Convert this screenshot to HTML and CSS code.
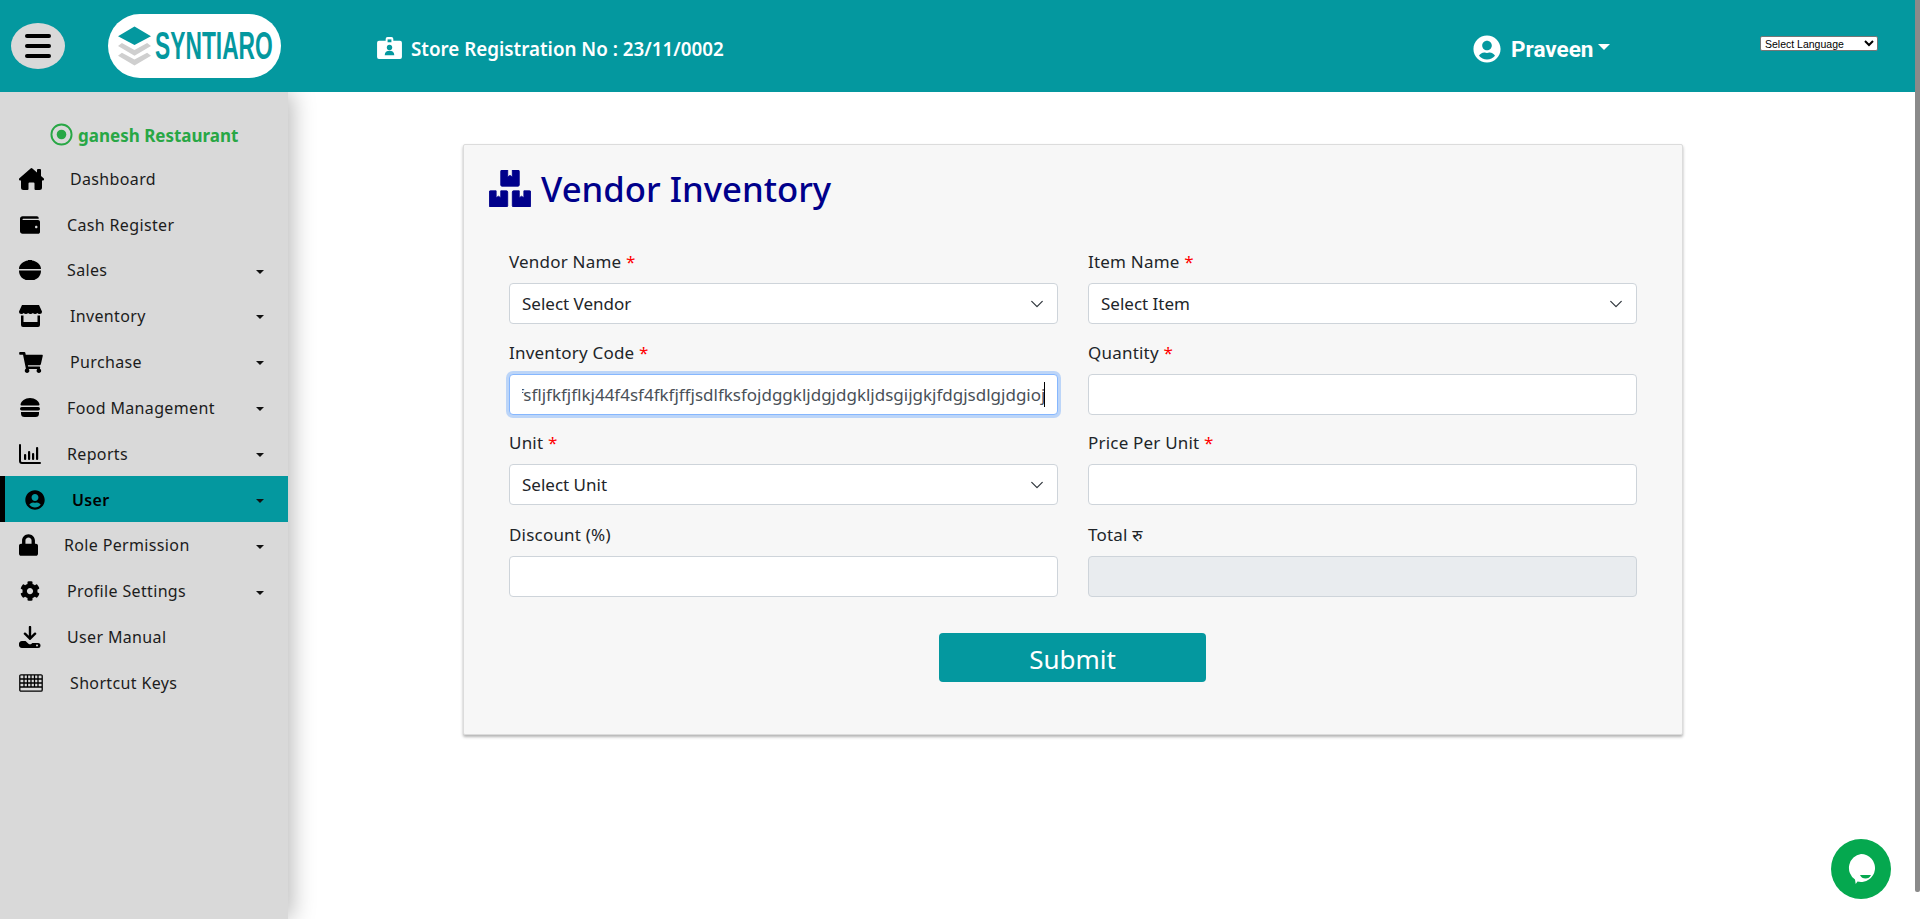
FILE: index.html
```html
<!DOCTYPE html>
<html lang="en">
<head>
<meta charset="utf-8">
<title>Vendor Inventory</title>
<link rel="stylesheet" href="styles.css">
</head>
<body>
<div class="scroll-thumb"></div>
<header class="topbar">
  <button class="menu-btn" aria-label="Menu"><span></span><span></span><span></span></button>
  <div class="logo">
    <svg class="logo-mark" viewBox="0 0 34 40"><path class="lm-t" d="M17 0 34 10 17 19 0 10Z"/><path class="lm-g" d="M4 17 17 24 30 17 34 20 17 30 0 20Z"/><path class="lm-g" d="M4 27 17 34 30 27 34 30 17 40 0 30Z"/></svg>
    <span class="logo-text">SYNTIARO</span>
  </div>
  <div class="store-reg">
    <svg class="reg-icon" viewBox="0 0 26 23"><path class="w" d="M2 4h7V2a2 2 0 0 1 2-2h4a2 2 0 0 1 2 2v2h7a2 2 0 0 1 2 2v15a2 2 0 0 1-2 2H2a2 2 0 0 1-2-2V6a2 2 0 0 1 2-2Z"/><rect class="t" x="11" y="2.500" width="4" height="3"/><circle class="t" cx="13" cy="11" r="2.800"/><path class="t" d="M8 19c0-3 2-4.500 5-4.500s5 1.500 5 4.500Z"/></svg>
    <span>Store Registration No : 23/11/0002</span>
  </div>
  <div class="user-menu">
    <svg class="user-icon" viewBox="0 0 496 512"><path d="M248 8C111 8 0 119 0 256s111 248 248 248 248-111 248-248S385 8 248 8zm0 96c48.600 0 88 39.400 88 88s-39.400 88-88 88-88-39.400-88-88 39.400-88 88-88zm0 344c-58.700 0-111.300-26.600-146.500-68.200 18.800-35.400 55.600-59.800 98.500-59.800 2.400 0 4.800.4 7.100 1.100 13 4.200 26.600 6.900 40.900 6.900 14.300 0 28-2.700 40.900-6.900 2.300-.7 4.700-1.100 7.100-1.100 42.900 0 79.700 24.400 98.500 59.800C359.300 421.400 306.700 448 248 448z"/></svg>
    <span class="user-name">Praveen</span>
    <i class="user-caret"></i>
  </div>
  <select class="lang"><option>Select Language</option></select>
</header>

<div class="layout">
  <aside class="sidebar">
    <div class="store-name">
      <svg class="store-dot" viewBox="0 0 24 24"><circle cx="12" cy="12" r="10.500"/><circle class="dot" cx="12" cy="12" r="5"/></svg>
      <span>ganesh Restaurant</span>
    </div>
    <nav>
      <a class="item wide"><span class="ic"><svg class="i-home" viewBox="0 0 25 22"><path d="M11.600.4a1.400 1.400 0 0 1 1.800 0L18 4.500V2a1 1 0 0 1 1-1h2a1 1 0 0 1 1 1v6l2.600 2.300c.9.8.3 2.200-.9 2.200H23v7a2.500 2.500 0 0 1-2.500 2.500h-4a1 1 0 0 1-1-1v-5.500a1 1 0 0 0-1-1h-4a1 1 0 0 0-1 1V21a1 1 0 0 1-1 1h-4A2.500 2.500 0 0 1 2 19.500v-7h-.7C.1 12.500-.5 11.100.4 10.300Z"/></svg></span>Dashboard</a>
      <a class="item"><span class="ic"><svg class="i-22" viewBox="0 0 512 512"><path d="M461.200 128H80c-8.840 0-16-7.160-16-16s7.160-16 16-16h384c8.840 0 16-7.160 16-16 0-26.510-21.490-48-48-48H64C28.650 32 0 60.650 0 96v320c0 35.350 28.650 64 64 64h397.200c28.020 0 50.800-21.530 50.800-48V176c0-26.470-22.780-48-50.800-48zM416 336c-17.670 0-32-14.330-32-32s14.330-32 32-32 32 14.330 32 32-14.330 32-32 32z"/></svg></span>Cash Register</a>
      <a class="item has-sub"><span class="ic"><svg class="i-22" viewBox="0 0 22 20"><path d="M0 9C0 4.500 4.500 1.200 9 .6a2 2 0 0 1 4 0C17.500 1.200 22 4.500 22 9Z"/><path d="M0 10.500h22c0 4.500-2.500 8-6 9l-.5.5h-9l-.5-.5c-3.500-1-6-4.500-6-9Z"/></svg></span>Sales<i class="caret"></i></a>
      <a class="item wide has-sub"><span class="ic"><svg class="i-23" viewBox="0 0 23 22"><path d="M3 0h17l3 6.500a2.500 2.500 0 0 1-2.500 2.500c-1 0-1.700-.4-2.200-1-.5.600-1.300 1-2.200 1s-1.700-.4-2.200-1c-.5.600-1.300 1-2.400 1s-1.900-.4-2.400-1c-.5.600-1.300 1-2.200 1s-1.700-.4-2.200-1c-.5.600-1.200 1-2.200 1A2.500 2.500 0 0 1 0 6.500Z"/><path d="M2 10.500h2.500V17h14v-6.500H21V20a2 2 0 0 1-2 2H4a2 2 0 0 1-2-2Z"/></svg></span>Inventory<i class="caret"></i></a>
      <a class="item wide has-sub"><span class="ic"><svg class="i-24" viewBox="0 0 576 512"><path d="M528.120 301.319l47.273-208C578.806 78.301 567.391 64 551.990 64H159.208l-9.166-44.810C147.758 8.021 137.930 0 126.529 0H24C10.745 0 0 10.745 0 24v16c0 13.255 10.745 24 24 24h69.883l70.248 343.435C147.325 417.100 136 435.222 136 456c0 30.928 25.072 56 56 56s56-25.072 56-56c0-15.674-6.447-29.835-16.824-40h209.647C430.447 426.165 424 440.326 424 456c0 30.928 25.072 56 56 56s56-25.072 56-56c0-22.172-12.888-41.332-31.579-50.405l5.517-24.276c3.413-15.018-8.002-29.319-23.403-29.319H218.117l-6.545-32h293.145c11.206 0 20.920-7.754 23.403-18.681z"/></svg></span>Purchase<i class="caret"></i></a>
      <a class="item has-sub"><span class="ic ic-in"><svg class="i-20" viewBox="0 0 20 19"><path d="M10 0c5 0 9 3 9.500 6.500a1 1 0 0 1-1 1h-17a1 1 0 0 1-1-1C1 3 5 0 10 0Z"/><rect y="9" width="20" height="3.500" rx="1.700"/><path d="M1 14h18v1.500a3.500 3.500 0 0 1-3.500 3.500h-11A3.500 3.500 0 0 1 1 15.500Z"/></svg></span>Food Management<i class="caret"></i></a>
      <a class="item has-sub"><span class="ic"><svg class="i-22" viewBox="0 0 22 20"><path d="M0 1a1 1 0 0 1 2 0v16a1 1 0 0 0 1 1h18a1 1 0 0 1 0 2H3a3 3 0 0 1-3-3Z"/><rect x="5" y="10" width="2.200" height="6" rx="1"/><rect x="9" y="7" width="2.200" height="9" rx="1"/><rect x="13" y="9" width="2.200" height="7" rx="1"/><rect x="17" y="3" width="2.200" height="13" rx="1"/></svg></span>Reports<i class="caret"></i></a>
      <a class="item active has-sub"><span class="ic"><svg class="i-22" viewBox="0 0 496 512"><path d="M248 8C111 8 0 119 0 256s111 248 248 248 248-111 248-248S385 8 248 8zm0 96c48.600 0 88 39.400 88 88s-39.400 88-88 88-88-39.400-88-88 39.400-88 88-88zm0 344c-58.700 0-111.300-26.600-146.500-68.200 18.800-35.400 55.600-59.800 98.500-59.800 2.400 0 4.800.4 7.100 1.100 13 4.200 26.600 6.900 40.900 6.900 14.300 0 28-2.700 40.900-6.900 2.300-.7 4.700-1.100 7.100-1.100 42.900 0 79.700 24.400 98.500 59.800C359.300 421.400 306.700 448 248 448z"/></svg></span>User<i class="caret"></i></a>
      <a class="item narrow has-sub"><span class="ic"><svg class="i-19" viewBox="0 0 448 512"><path d="M400 224h-24v-72C376 68.200 307.800 0 224 0S72 68.200 72 152v72H48c-26.500 0-48 21.500-48 48v192c0 26.500 21.500 48 48 48h352c26.500 0 48-21.500 48-48V272c0-26.500-21.500-48-48-48zm-104 0H152v-72c0-39.700 32.300-72 72-72s72 32.300 72 72v72z"/></svg></span>Role Permission<i class="caret"></i></a>
      <a class="item has-sub"><span class="ic"><svg class="i-22" viewBox="0 0 512 512"><path d="M487.400 315.700l-42.600-24.600c4.300-23.200 4.300-47 0-70.200l42.600-24.600c4.900-2.800 7.100-8.600 5.500-14-11.100-35.600-30-67.800-54.700-94.600-3.800-4.100-10-5.100-14.800-2.300L380.800 110c-17.900-15.400-38.500-27.300-60.800-35.100V25.800c0-5.600-3.900-10.500-9.400-11.700-36.700-8.200-74.300-7.800-109.200 0-5.500 1.200-9.400 6.100-9.400 11.700V75c-22.200 7.900-42.800 19.800-60.800 35.100L88.700 85.500c-4.900-2.800-11-1.900-14.800 2.300-24.700 26.700-43.600 58.900-54.700 94.600-1.700 5.400.6 11.200 5.500 14L67.300 221c-4.300 23.200-4.300 47 0 70.200l-42.600 24.600c-4.900 2.800-7.100 8.600-5.500 14 11.100 35.600 30 67.800 54.700 94.600 3.800 4.100 10 5.100 14.800 2.300l42.600-24.600c17.900 15.400 38.500 27.300 60.800 35.100v49.200c0 5.600 3.900 10.500 9.400 11.700 36.700 8.200 74.300 7.800 109.200 0 5.500-1.200 9.400-6.100 9.400-11.700v-49.200c22.200-7.900 42.800-19.800 60.800-35.100l42.600 24.600c4.900 2.800 11 1.900 14.800-2.300 24.700-26.700 43.600-58.900 54.700-94.600 1.500-5.500-.7-11.300-5.600-14.100zM256 336c-44.100 0-80-35.900-80-80s35.900-80 80-80 80 35.900 80 80-35.900 80-80 80z"/></svg></span>Profile Settings<i class="caret"></i></a>
      <a class="item"><span class="ic"><svg class="i-dl" viewBox="0 0 22 22"><path d="M9.800 1a1.200 1.200 0 0 1 2.400 0v8.800l3-3a1.200 1.200 0 0 1 1.700 1.700l-5 5a1.200 1.200 0 0 1-1.800 0l-5-5a1.200 1.200 0 0 1 1.700-1.700l3 3Z"/><path d="M3 15h3.500l2.700 2.500a2.600 2.600 0 0 0 3.600 0l.5-.5H19a2.500 2.500 0 0 1 0 5H3a3 3 0 0 1-3-3.500A3 3 0 0 1 3 15Zm15 3.500a1 1 0 1 0 0 2 1 1 0 0 0 0-2Z" fill-rule="evenodd"/></svg></span>User Manual</a>
      <a class="item wide"><span class="ic"><svg class="i-kb" viewBox="0 0 24 18"><path d="M2 .8h20A1.200 1.200 0 0 1 23.200 2v14a1.200 1.200 0 0 1-1.200 1.200H2A1.200 1.200 0 0 1 .8 16V2A1.200 1.200 0 0 1 2 .8ZM1 5h22M1 9h22M1 13h22M5 1v12M8.500 1v12M12 1v12M15.500 1v12M19 1v12"/></svg></span>Shortcut Keys</a>
    </nav>
  </aside>

  <main class="content">
    <section class="card">
      <h1 class="title">
        <svg class="title-icon" viewBox="0 0 576 512"><path d="M560 288h-80v96l-32-21.300-32 21.300v-96h-80c-8.800 0-16 7.200-16 16v192c0 8.800 7.200 16 16 16h224c8.800 0 16-7.200 16-16V304c0-8.800-7.200-16-16-16zm-384-64h224c8.800 0 16-7.200 16-16V16c0-8.800-7.200-16-16-16h-80v96l-32-21.300L256 96V0h-80c-8.800 0-16 7.200-16 16v192c0 8.800 7.200 16 16 16zm64 64h-80v96l-32-21.300L96 384v-96H16c-8.800 0-16 7.200-16 16v192c0 8.800 7.200 16 16 16h224c8.800 0 16-7.200 16-16V304c0-8.800-7.200-16-16-16z"/></svg>
        <span>Vendor Inventory</span>
      </h1>
      <form class="form-grid">
        <div class="field"><label>Vendor Name <b>*</b></label><select class="control select"><option>Select Vendor</option></select></div>
        <div class="field"><label>Item Name <b>*</b></label><select class="control select"><option>Select Item</option></select></div>
        <div class="field"><label>Inventory Code <b>*</b></label><div class="focus-wrap"><input id="code" class="control focus" type="text" value="fdsfsfljfkfjflkj44f4sf4fkfjffjsdlfksfojdggkljdgjdgkljdsgijgkjfdgjsdlgjdgioj"><i class="text-caret"></i></div></div>
        <div class="field"><label>Quantity <b>*</b></label><input class="control" type="text"></div>
        <div class="field"><label>Unit <b>*</b></label><select class="control select"><option>Select Unit</option></select></div>
        <div class="field"><label>Price Per Unit <b>*</b></label><input class="control" type="text"></div>
        <div class="field last"><label>Discount (%)</label><input class="control" type="text"></div>
        <div class="field last"><label>Total रु</label><input class="control" type="text" disabled></div>
        <div class="actions"><button type="button" class="submit">Submit</button></div>
      </form>
    </section>
  </main>
</div>

<button class="chat" aria-label="Chat">
  <svg viewBox="0 0 30 30"><path class="bubble" d="M15 0a14 14 0 1 1-3.500 27.550L9.700 30l-.7-4.600A14 14 0 0 1 15 0Z"/><path class="smile" d="M14 21h11c-1 2.500-3 3.500-5.500 3.500S15 23.500 14 21Z"/></svg>
</button>
<script src="app.js"></script>
</body>
</html>
```

FILE: styles.css
```css
* { box-sizing: border-box; }
html, body { margin: 0; height: 919px; overflow: hidden; background: #fff; }
body { font-family: "Noto Sans", "Open Sans", sans-serif; font-size: 16px; color: #212529; }

.scroll-thumb { position: absolute; top: 0; right: 0; width: 5px; height: 892px; background: #8a8a8a; border-radius: 0 0 2px 2px; z-index: 5; }

.topbar { position: relative; z-index: 3; height: 92px; background: #04989f; display: flex; align-items: center; padding-left: 11px; color: #fff; }
.menu-btn { width: 54px; height: 46px; border: 0; border-radius: 50%; background: #d9d9d9; display: flex; flex-direction: column; align-items: center; justify-content: center; gap: 6px; padding: 0; }
.menu-btn span { width: 26px; height: 4px; background: #000; border-radius: 2px; }

.logo { margin-left: 43px; width: 173px; height: 64px; border-radius: 32px; background: #fff; display: flex; align-items: center; padding-left: 10px; overflow: hidden; }
.logo-mark { width: 33px; height: 40px; flex: none; }
.lm-t { fill: #04989f; }
.lm-g { fill: #cfcfcf; }
.logo-text { margin-left: 4px; font-family: "Liberation Sans", Arial, sans-serif; font-weight: 700; font-size: 38px; line-height: 1; color: #04989f; transform: scaleX(.6); transform-origin: left center; }

.store-reg { margin: 5px 0 0 96px; display: flex; align-items: center; gap: 9px; font-size: 18.800px; font-weight: 600; }
.reg-icon { width: 25px; height: 22px; margin-top: -1px; }
.reg-icon .w { fill: #fff; }
.reg-icon .t { fill: #04989f; }

.user-menu { position: absolute; left: 1473px; top: 35px; display: flex; align-items: center; }
.user-icon { width: 28px; height: 28px; fill: #fff; }
.user-name { margin-left: 10px; font-family: Roboto, sans-serif; font-weight: 700; font-size: 22.500px; line-height: 28px; }
.user-caret { margin: -4px 0 0 5px; border-left: 6px solid transparent; border-right: 6px solid transparent; border-top: 6.500px solid #fff; }

.lang { position: absolute; left: 1760px; top: 36px; width: 118px; height: 15px; padding: 0; font-family: "Liberation Sans", Arial, sans-serif; font-size: 10.500px; background: #fff; color: #000; border: 1px solid #767676; border-radius: 2px; }

.layout { display: flex; height: 827px; }
.sidebar { position: relative; z-index: 2; flex: none; width: 288px; background: #d9d9d9; padding-top: 22px; box-shadow: 4px 0 22px rgba(0,0,0,.28); }
.store-name { height: 41px; padding-left: 50px; display: flex; align-items: center; gap: 5px; color: #28a745; font-weight: 700; font-size: 17px; }
.store-name span { margin-top: 2px; }
.store-dot { width: 23px; height: 23px; fill: none; stroke: #28a745; stroke-width: 2; }
.store-dot .dot { fill: #28a745; stroke: none; }

.item { position: relative; height: 45.850px; display: flex; align-items: center; padding: 1.500px 0 0 19px; font-size: 16px; letter-spacing: .35px; color: #1c1c1c; }
.ic { flex: none; width: 48px; display: flex; align-items: center; }
.ic svg { display: block; fill: #000; }
.item.wide .ic { width: 51px; }
.item.narrow .ic { width: 45px; }
.ic-in svg { margin-left: 1px; }
.i-home { width: 25px; height: 22px; }
.i-19 { width: 19px; height: 22px; }
.i-20 { width: 20px; height: 19px; }
.i-22 { width: 22px; height: 20px; }
.i-23 { width: 23px; height: 22px; }
.i-24 { width: 24px; height: 21px; }
.i-dl { width: 22px; height: 22px; }
.ic .i-kb { width: 24px; height: 18px; fill: none; stroke: #000; stroke-width: 1.300; }
.caret { position: absolute; left: 256px; top: 50%; border-left: 4px solid transparent; border-right: 4px solid transparent; border-top: 4.500px solid #111; }
.item.active { background: #04989f; border-left: 5px solid #000; font-weight: 600; color: #000; }
.item.active .caret { left: 251px; }

.content { flex: 1; padding: 52px 0 0 175px; }
.card { width: 1220px; height: 591px; background: #f7f7f7; border: 1px solid #dcdcdc; border-radius: 2px; box-shadow: 0 2px 3px rgba(0,0,0,.3); padding: 0 45px; }
.title { margin: 0 0 18px -20px; height: 87px; display: flex; align-items: center; gap: 10px; font-weight: 500; font-size: 34.700px; color: #00008b; }
.title-icon { width: 42px; height: 37px; fill: #00008b; stroke: #00008b; stroke-width: 12; stroke-linejoin: round; }

.form-grid { display: grid; grid-template-columns: 549px 549px; column-gap: 30px; }
.field { margin-bottom: 16.500px; }
.field label { display: block; height: 24px; line-height: 24px; margin-bottom: 9px; font-size: 17px; letter-spacing: .2px; }
.field label b { font-weight: 400; color: #f00; }
.control { display: block; width: 100%; height: 41px; padding: 0 12px; font: inherit; font-size: 17px; color: #212529; background: #fff; border: 1px solid #ced4da; border-radius: 4px; outline: 0; }
.select { appearance: none; background-image: url("data:image/svg+xml,%3csvg xmlns='http://www.w3.org/2000/svg' viewBox='0 0 16 16'%3e%3cpath fill='none' stroke='%23343a40' stroke-linecap='round' stroke-linejoin='round' stroke-width='1.500' d='m2 5 6 6 6-6'/%3e%3c/svg%3e"); background-repeat: no-repeat; background-position: right 13px center; background-size: 14px 14px; }
.focus-wrap { position: relative; }
.focus { color: #495057; border-color: #86b7fe; box-shadow: 0 0 0 3px rgba(13,110,253,.25); caret-color: transparent; }
.text-caret { position: absolute; right: 13px; top: 8px; width: 1px; height: 25px; background: #000; }
.field.last { margin-top: 1.500px; }
.control:disabled { background: #e9ecef; }
.actions { grid-column: 1 / -1; display: flex; justify-content: center; margin-top: 19.500px; padding-right: 1px; }
.submit { width: 267px; height: 49px; padding: 3px 0 0; font: inherit; font-size: 26px; color: #fff; background: #04989f; border: 0; border-radius: 4px; }

.chat { position: absolute; left: 1831px; top: 839px; z-index: 4; width: 60px; height: 60px; padding: 0; border: 0; border-radius: 50%; background: #05a84f; display: flex; align-items: center; justify-content: center; }
.chat svg { width: 30px; height: 30px; }
.bubble { fill: #fff; }
.smile { fill: #05a84f; }
```

FILE: app.js
```js
var code = document.getElementById('code');
code.focus();
code.setSelectionRange(code.value.length, code.value.length);
code.scrollLeft = code.scrollWidth;
```
